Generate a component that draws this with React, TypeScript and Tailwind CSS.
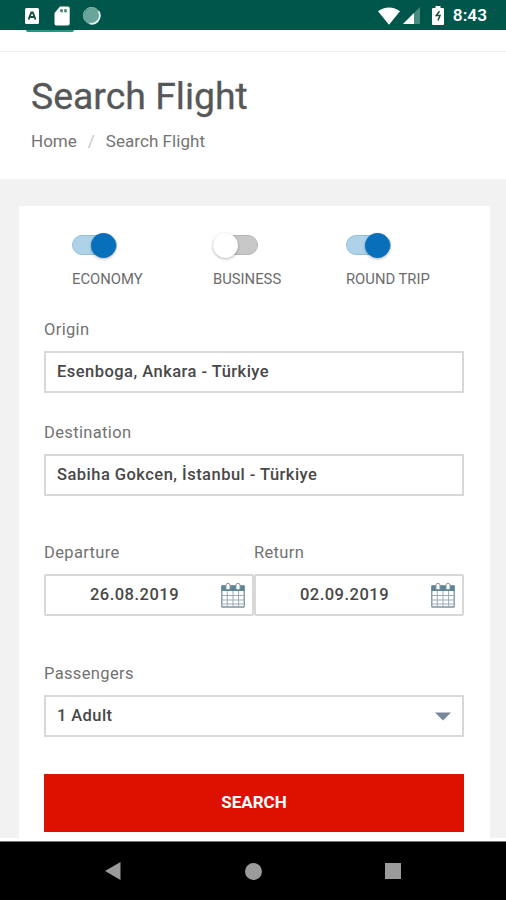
import { useState } from 'react';

function StatusBar() {
  return (
    <header className="relative h-[30px] shrink-0 bg-[#00564a]">
      <div className="flex h-full items-center justify-between pt-px pl-[25px] pr-[19px]">
        <div className="flex items-center">
          <svg width="14" height="16" viewBox="0 0 14 16">
            <rect width="14" height="16" rx="1.5" fill="#fff" />
            <path d="M3.6 11.5 6.3 4.5h1.5l2.7 7M4.8 9h4.5" fill="none" stroke="#1d4a43" strokeWidth="1.9" />
          </svg>
          <svg className="ml-[15px]" width="16" height="20" viewBox="0 0 16 20">
            <path d="M6 .5h8A1.7 1.7 0 0 1 15.700 2.200v15.600A1.700 1.700 0 0 1 14 19.500H2.200A1.700 1.700 0 0 1 .5 17.800V7z" fill="#fff" />
            <path d="M6.200 3.300h2.600v3H6.200zM10.200 3.300h2.600v3h-2.600z" fill="#3c7f76" />
          </svg>
          <svg className="ml-[13px]" width="18" height="18" viewBox="0 0 18 18">
            <circle cx="9" cy="9" r="8.200" fill="#6aa59b" />
            <path d="M15.500 4.200A8.200 8.200 0 1 0 6.500 16.500" fill="none" stroke="#8bb9b1" strokeWidth="1" />
            <path d="M15.500 4.200A8.200 8.200 0 0 1 6.500 16.500" fill="none" stroke="#e3f0ee" strokeWidth="1.800" />
          </svg>
        </div>
        <div className="flex items-center text-white">
          <svg width="22" height="18" viewBox="0 0 22 18">
            <path d="M0 4.200C6.200-.9 15.800-.9 22 4.200L11 17.800z" fill="#fff" />
          </svg>
          <svg className="ml-[3px]" width="17" height="17" viewBox="0 0 17 17">
            <path d="M0 17 17 0v17z" fill="#4a8a80" />
            <path d="M0 17 11 6v11z" fill="#fff" />
          </svg>
          <svg className="ml-[12px]" width="12" height="19" viewBox="0 0 12 19">
            <path d="M3.500 0h5v2H11a1 1 0 0 1 1 1v15a1 1 0 0 1-1 1H1a1 1 0 0 1-1-1V3a1 1 0 0 1 1-1h2.500z" fill="#fff" />
            <path d="M7.500 5.300 4.300 9.500H8L6 14.500" fill="none" stroke="#1d4a43" strokeWidth="1.500" />
          </svg>
          <span className="ml-[9px] text-[17.2px] leading-none font-semibold">8:43</span>
        </div>
      </div>
      <div className="absolute top-[30px] left-[26px] h-[2px] w-12 rounded-b bg-[#1b9b80]" />
    </header>
  );
}

function Toggle({ label, initial, className }: { label: string; initial: boolean; className: string }) {
  const [on, setOn] = useState(initial);

  return (
    <button type="button" onClick={() => setOn(!on)} className={`flex flex-col items-start ${className}`}>
      <span
        className={`flex h-5 w-[45px] items-center rounded-full border ${
          on ? 'justify-end border-[#92c0da] bg-[#aed3e8]' : 'justify-start border-[#b5b5b5] bg-[#c8c8c8]'
        }`}
      >
        <span
          className={`size-[25px] shrink-0 rounded-full shadow-[0_1px_3px_rgba(0,0,0,0.3)] ${
            on ? 'bg-[#0870ba]' : '-ml-px bg-white'
          }`}
        />
      </span>
      <span className="mt-[14px] text-[14.8px] leading-5 whitespace-nowrap text-[#6c6c6c]">{label}</span>
    </button>
  );
}

function Label({ children }: { children: string }) {
  return <span className="block text-[16.5px] leading-5 tracking-[0.35px] text-[#727272]">{children}</span>;
}

const box = 'mt-[11px] flex h-[42px] items-center border-2 border-[#d8d8d8] text-[16.5px] font-medium text-[#484848]';

function TextField({ label, value, className }: { label: string; value: string; className: string }) {
  return (
    <div className={className}>
      <Label>{label}</Label>
      <div className={`${box} px-[11px] tracking-[0.47px]`}>{value}</div>
    </div>
  );
}

function CalendarIcon() {
  return (
    <svg width="24" height="26" viewBox="0 0 24 26" fill="none">
      <rect x="0.800" y="4" width="22.400" height="21" rx="0.500" fill="#fff" stroke="#7c929f" strokeWidth="1.300" />
      <path d="M.5 3.500h23V9H.5z" fill="#5f8494" />
      <path d="M1 13.500h22M1 18h22M1 22h22M6.300 9v16M12 9v16M17.600 9v16" stroke="#9aabb5" strokeWidth="1" />
      <path d="M5 7.500V3.300a2 2 0 0 1 4 0v4.200zM15 7.500V3.300a2 2 0 0 1 4 0v4.200z" fill="#fff" stroke="#8298a4" />
    </svg>
  );
}

function DateField({ label, value }: { label: string; value: string }) {
  return (
    <div className="flex-1">
      <Label>{label}</Label>
      <div className={`${box} rounded-[2px] pr-[7px]`}>
        <span className="flex-1 pl-0.5 text-center tracking-[0.5px]">{value}</span>
        <CalendarIcon />
      </div>
    </div>
  );
}

export default function App() {
  return (
    <div className="flex h-[900px] w-[506px] flex-col overflow-hidden bg-[#f2f2f2] font-[Roboto,sans-serif]">
      <StatusBar />

      <div className="h-[22px] shrink-0 border-b border-[#f0f0f0] bg-white" />

      <section className="h-[127px] shrink-0 bg-white pl-[31px]">
        <h1 className="pt-[22px] text-[37.4px] leading-[44px] text-[#555759] [-webkit-text-stroke:0.3px_#555759]">
          Search Flight
        </h1>
        <nav className="mt-[13px] flex text-[17px] leading-5 text-[#747474]">
          <span>Home</span>
          <span className="mx-[11px] text-[#c8c8c8]">/</span>
          <span className="tracking-[0.06px]">Search Flight</span>
        </nav>
      </section>

      <main className="min-h-0 flex-1 border-b-[3px] border-white pt-[27px] pr-4 pl-[19px]">
        <div className="h-full bg-white pt-[29px] pr-[26px] pl-[25px]">
          <div className="flex pl-[28px]">
            <Toggle label="ECONOMY" initial={true} className="w-[141px]" />
            <Toggle label="BUSINESS" initial={false} className="w-[133px]" />
            <Toggle label="ROUND TRIP" initial={true} className="w-[90px]" />
          </div>

          <TextField label="Origin" value="Esenboga, Ankara - Türkiye" className="mt-[31px]" />
          <TextField label="Destination" value="Sabiha Gokcen, İstanbul - Türkiye" className="mt-[30px]" />

          <div className="mt-[47px] flex">
            <DateField label="Departure" value="26.08.2019" />
            <DateField label="Return" value="02.09.2019" />
          </div>

          <div className="mt-[48px]">
            <Label>Passengers</Label>
            <div className={`${box} justify-between pr-[11px] pl-[11px] tracking-[0.4px]`}>
              <span>1 Adult</span>
              <svg width="16" height="9" viewBox="0 0 16 9">
                <path d="M0 .5h16L8 8.500z" fill="#77899a" />
              </svg>
            </div>
          </div>

          <button type="button" className="mt-[37px] h-[58px] w-full bg-[#dd1100] text-[17px] font-bold text-white">
            SEARCH
          </button>
        </div>
      </main>

      <footer className="flex h-[59px] shrink-0 items-center justify-between border-t border-[#777] bg-black pr-[105px] pl-[105px]">
        <svg width="16" height="18" viewBox="0 0 16 18">
          <path d="M15.500 0v18L0 9z" fill="#9b9b9b" />
        </svg>
        <span className="size-[17px] rounded-full bg-[#9b9b9b]" />
        <span className="size-4 bg-[#9b9b9b]" />
      </footer>
    </div>
  );
}
